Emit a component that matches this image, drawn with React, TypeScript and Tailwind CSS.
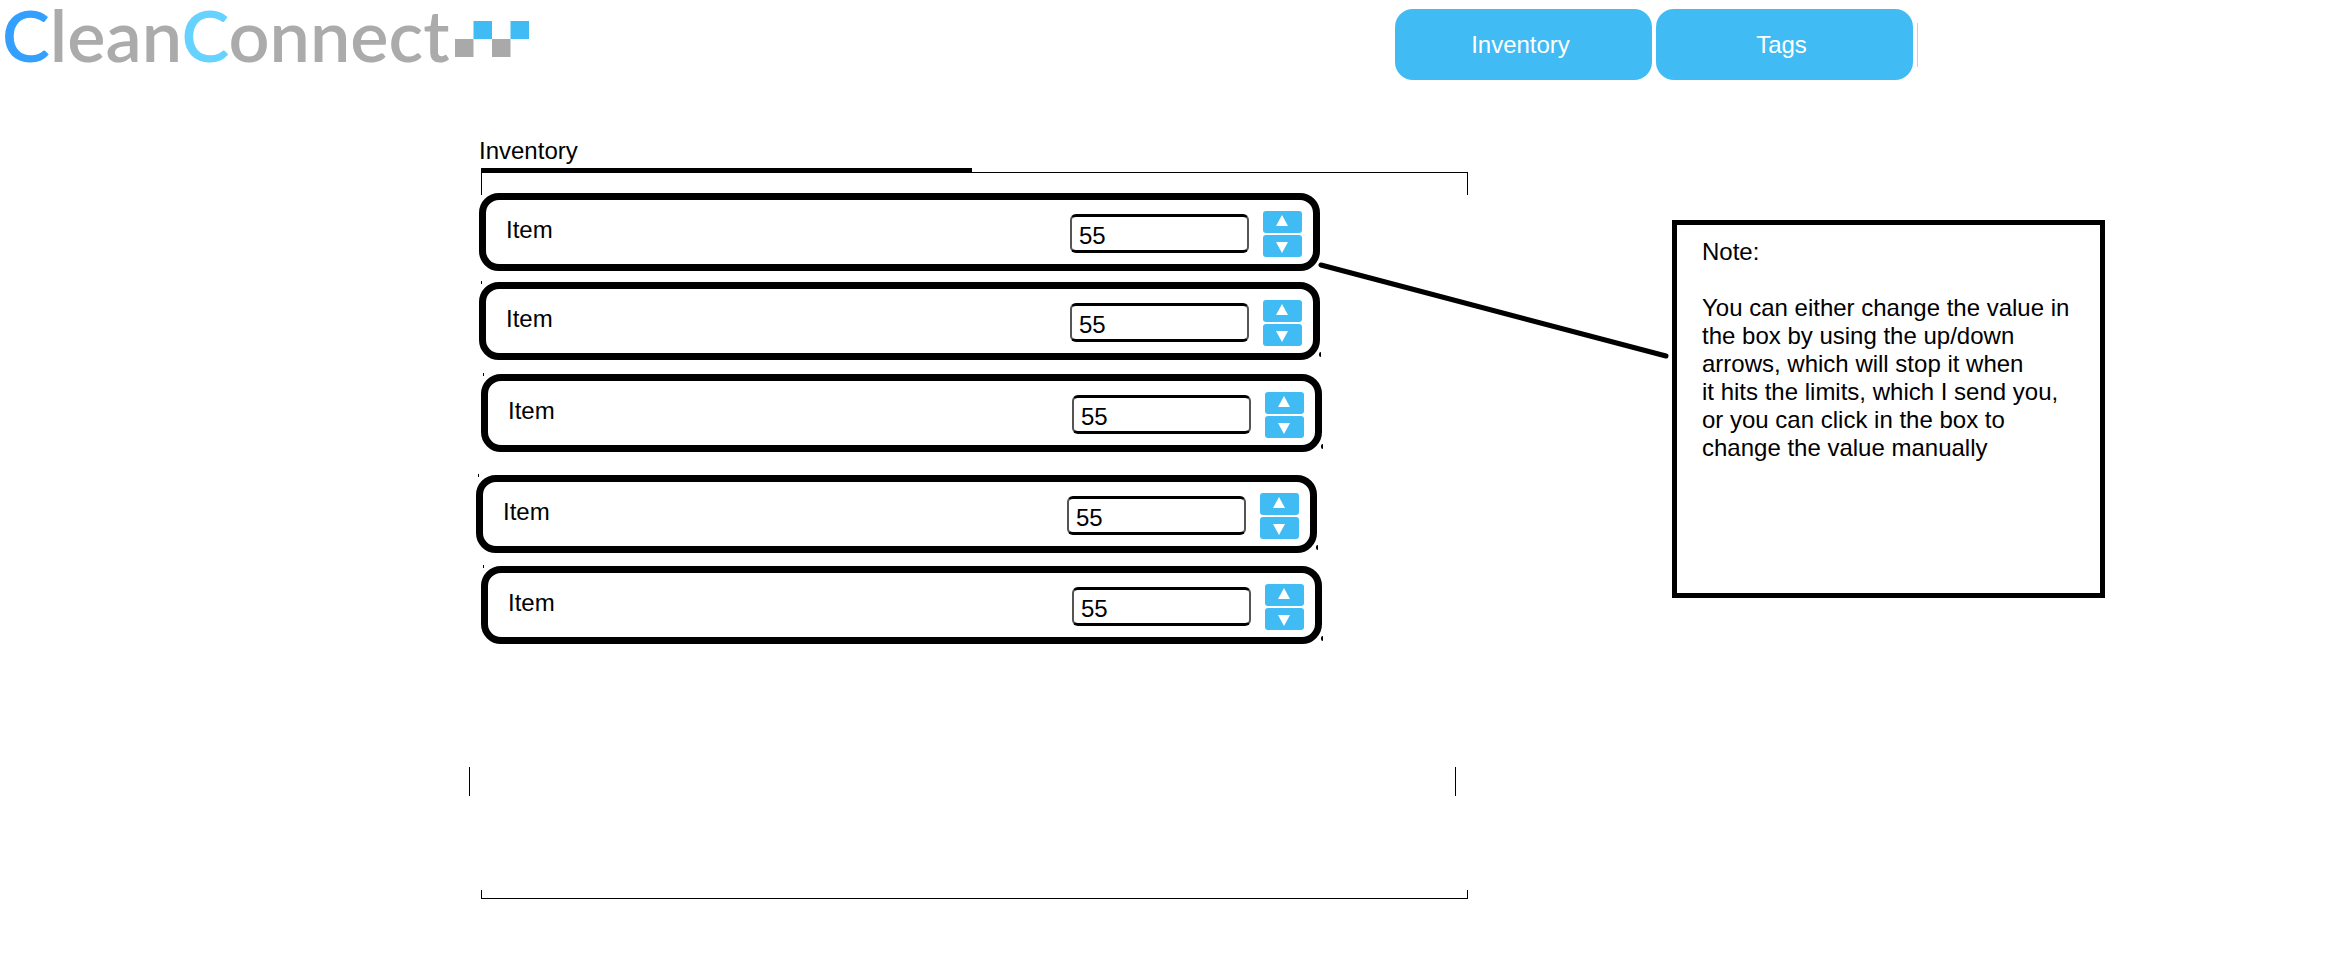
import { useState } from "react";

const rows = [
  { id: "item-1", spacing: "", marks: false },
  { id: "item-2", spacing: "mt-[11px]", marks: true },
  { id: "item-3", spacing: "mt-[14px] translate-x-0.5", marks: true },
  { id: "item-4", spacing: "mt-[23px] -translate-x-[3px]", marks: true },
  { id: "item-5", spacing: "mt-[13px] translate-x-0.5", marks: true },
];

const MIN = 0;
const MAX = 100;

function Logo() {
  return (
    <a href="#" aria-label="CleanConnect" className="flex items-start pl-0.5">
      <span className="font-['Lato',sans-serif] text-[72px] leading-[68px] font-semibold whitespace-nowrap text-[#ababab]">
        <span className="text-[#339fff]">C</span>lean
        <span className="text-[#66d2ff]">C</span>onnect
      </span>
      <svg className="mt-[21px] ml-1.5 h-9 w-[74px] shrink-0" viewBox="0 0 74 36" aria-hidden="true">
        <rect x="0" y="18" width="18.5" height="18" fill="#a9a9a9" />
        <rect x="18.5" y="0" width="18.5" height="18" fill="#41bbf3" />
        <rect x="37" y="18" width="18.5" height="18" fill="#a9a9a9" />
        <rect x="55.5" y="0" width="18.5" height="18" fill="#41bbf3" />
      </svg>
    </a>
  );
}

function StepButton({ label, points, onClick }: { label: string; points: string; onClick: () => void }) {
  return (
    <button
      type="button"
      aria-label={label}
      onClick={onClick}
      className="h-[22px] w-[39px] rounded-[3px] bg-[#41bbf3]"
    >
      <svg className="h-[22px] w-[39px]" viewBox="0 0 39 22" aria-hidden="true">
        <polygon points={points} fill="#fff" />
      </svg>
    </button>
  );
}

function ItemRow({ id, spacing, marks }: { id: string; spacing: string; marks: boolean }) {
  const [value, setValue] = useState("55");
  const step = (by: number) =>
    setValue((v) => String(Math.min(MAX, Math.max(MIN, (Number(v) || 0) + by))));

  return (
    <li className={`relative ${spacing}`}>
      {marks && (
        <>
          <span className="absolute -top-px left-0.5 h-[3px] w-px bg-black" />
          <span className="absolute -right-px bottom-[3px] h-[5px] w-0.5 rounded-l-full bg-black" />
        </>
      )}
      <div className="flex h-[78px] items-center rounded-[20px] border-[7px] border-black bg-white pt-[3px] pr-[11px] pl-5">
        <label htmlFor={id} className="mb-2 flex-1">
          Item
        </label>
        <input
          id={id}
          inputMode="numeric"
          value={value}
          onChange={(e) => setValue(e.target.value)}
          className="h-[39px] w-[179px] rounded-[6px] border-x-2 border-y-3 border-x-[#555] border-y-black bg-white pt-1 pl-[7px] outline-none"
        />
        <div className="ml-[14px] flex flex-col gap-0.5">
          <StepButton label="Increase" points="19,4 25,15 13,15" onClick={() => step(1)} />
          <StepButton label="Decrease" points="13,7 25,7 19,18" onClick={() => step(-1)} />
        </div>
      </div>
    </li>
  );
}

export default function App() {
  return (
    <div className="min-h-screen bg-white font-['Liberation_Sans',Arial,sans-serif] text-2xl leading-7 text-black">
      <header className="grid grid-cols-[1395fr_523fr_430fr]">
        <Logo />
        <nav className="flex items-center gap-1 pt-[9px] text-white">
          <a href="#inventory" className="flex h-[71px] flex-1 items-center justify-center rounded-[18px] bg-[#41bbf3] pr-1.5">
            Inventory
          </a>
          <a href="#tags" className="flex h-[71px] flex-1 items-center justify-center rounded-[18px] bg-[#41bbf3] pr-1.5">
            Tags
          </a>
          <span className="h-11 w-px bg-[#a3ddf8]" />
        </nav>
      </header>

      <main className="grid grid-cols-[476fr_846fr_146fr_204fr_433fr_243fr] items-start">
        <section id="inventory" className="col-span-2 col-start-2 row-start-1 pt-[57px]">
          <h1 className="pl-[3px]">Inventory</h1>
          <div className="mt-[3px] ml-[5px] h-1 w-[calc(50%-5px)] bg-black" />
          <div className="-mb-0.5 ml-[5px] h-[23px] border-x border-t border-black" />
          <ul className="mr-[148px] ml-[3px]">
            {rows.map((row) => (
              <ItemRow key={row.id} {...row} />
            ))}
          </ul>
          <div className="mt-[123px] mr-3 -ml-[7px] h-[29px] border-x border-black" />
          <div className="mt-[94px] ml-[5px] h-[9px] border-x border-b border-black" />
        </section>

        <svg
          className="pointer-events-none col-span-2 col-start-3 row-start-1 mt-[185px] h-[91px] w-full overflow-visible"
          viewBox="0 0 350 91"
          preserveAspectRatio="none"
          aria-hidden="true"
        >
          <line x1="-1" y1="0" x2="344" y2="91" stroke="#000" strokeWidth="5" strokeLinecap="round" />
        </svg>

        <aside className="col-start-5 row-start-1 mt-[140px] min-h-[378px] border-[5px] border-black pt-[13px] pr-[25px] pl-[25px]">
          <p>Note:</p>
          <p className="mt-7">
            You can either change the value in the box by using the up/down arrows, which will stop it when
            <br />
            it hits the limits, which I send you, or you can click in the box to change the value manually
          </p>
        </aside>
      </main>
    </div>
  );
}
